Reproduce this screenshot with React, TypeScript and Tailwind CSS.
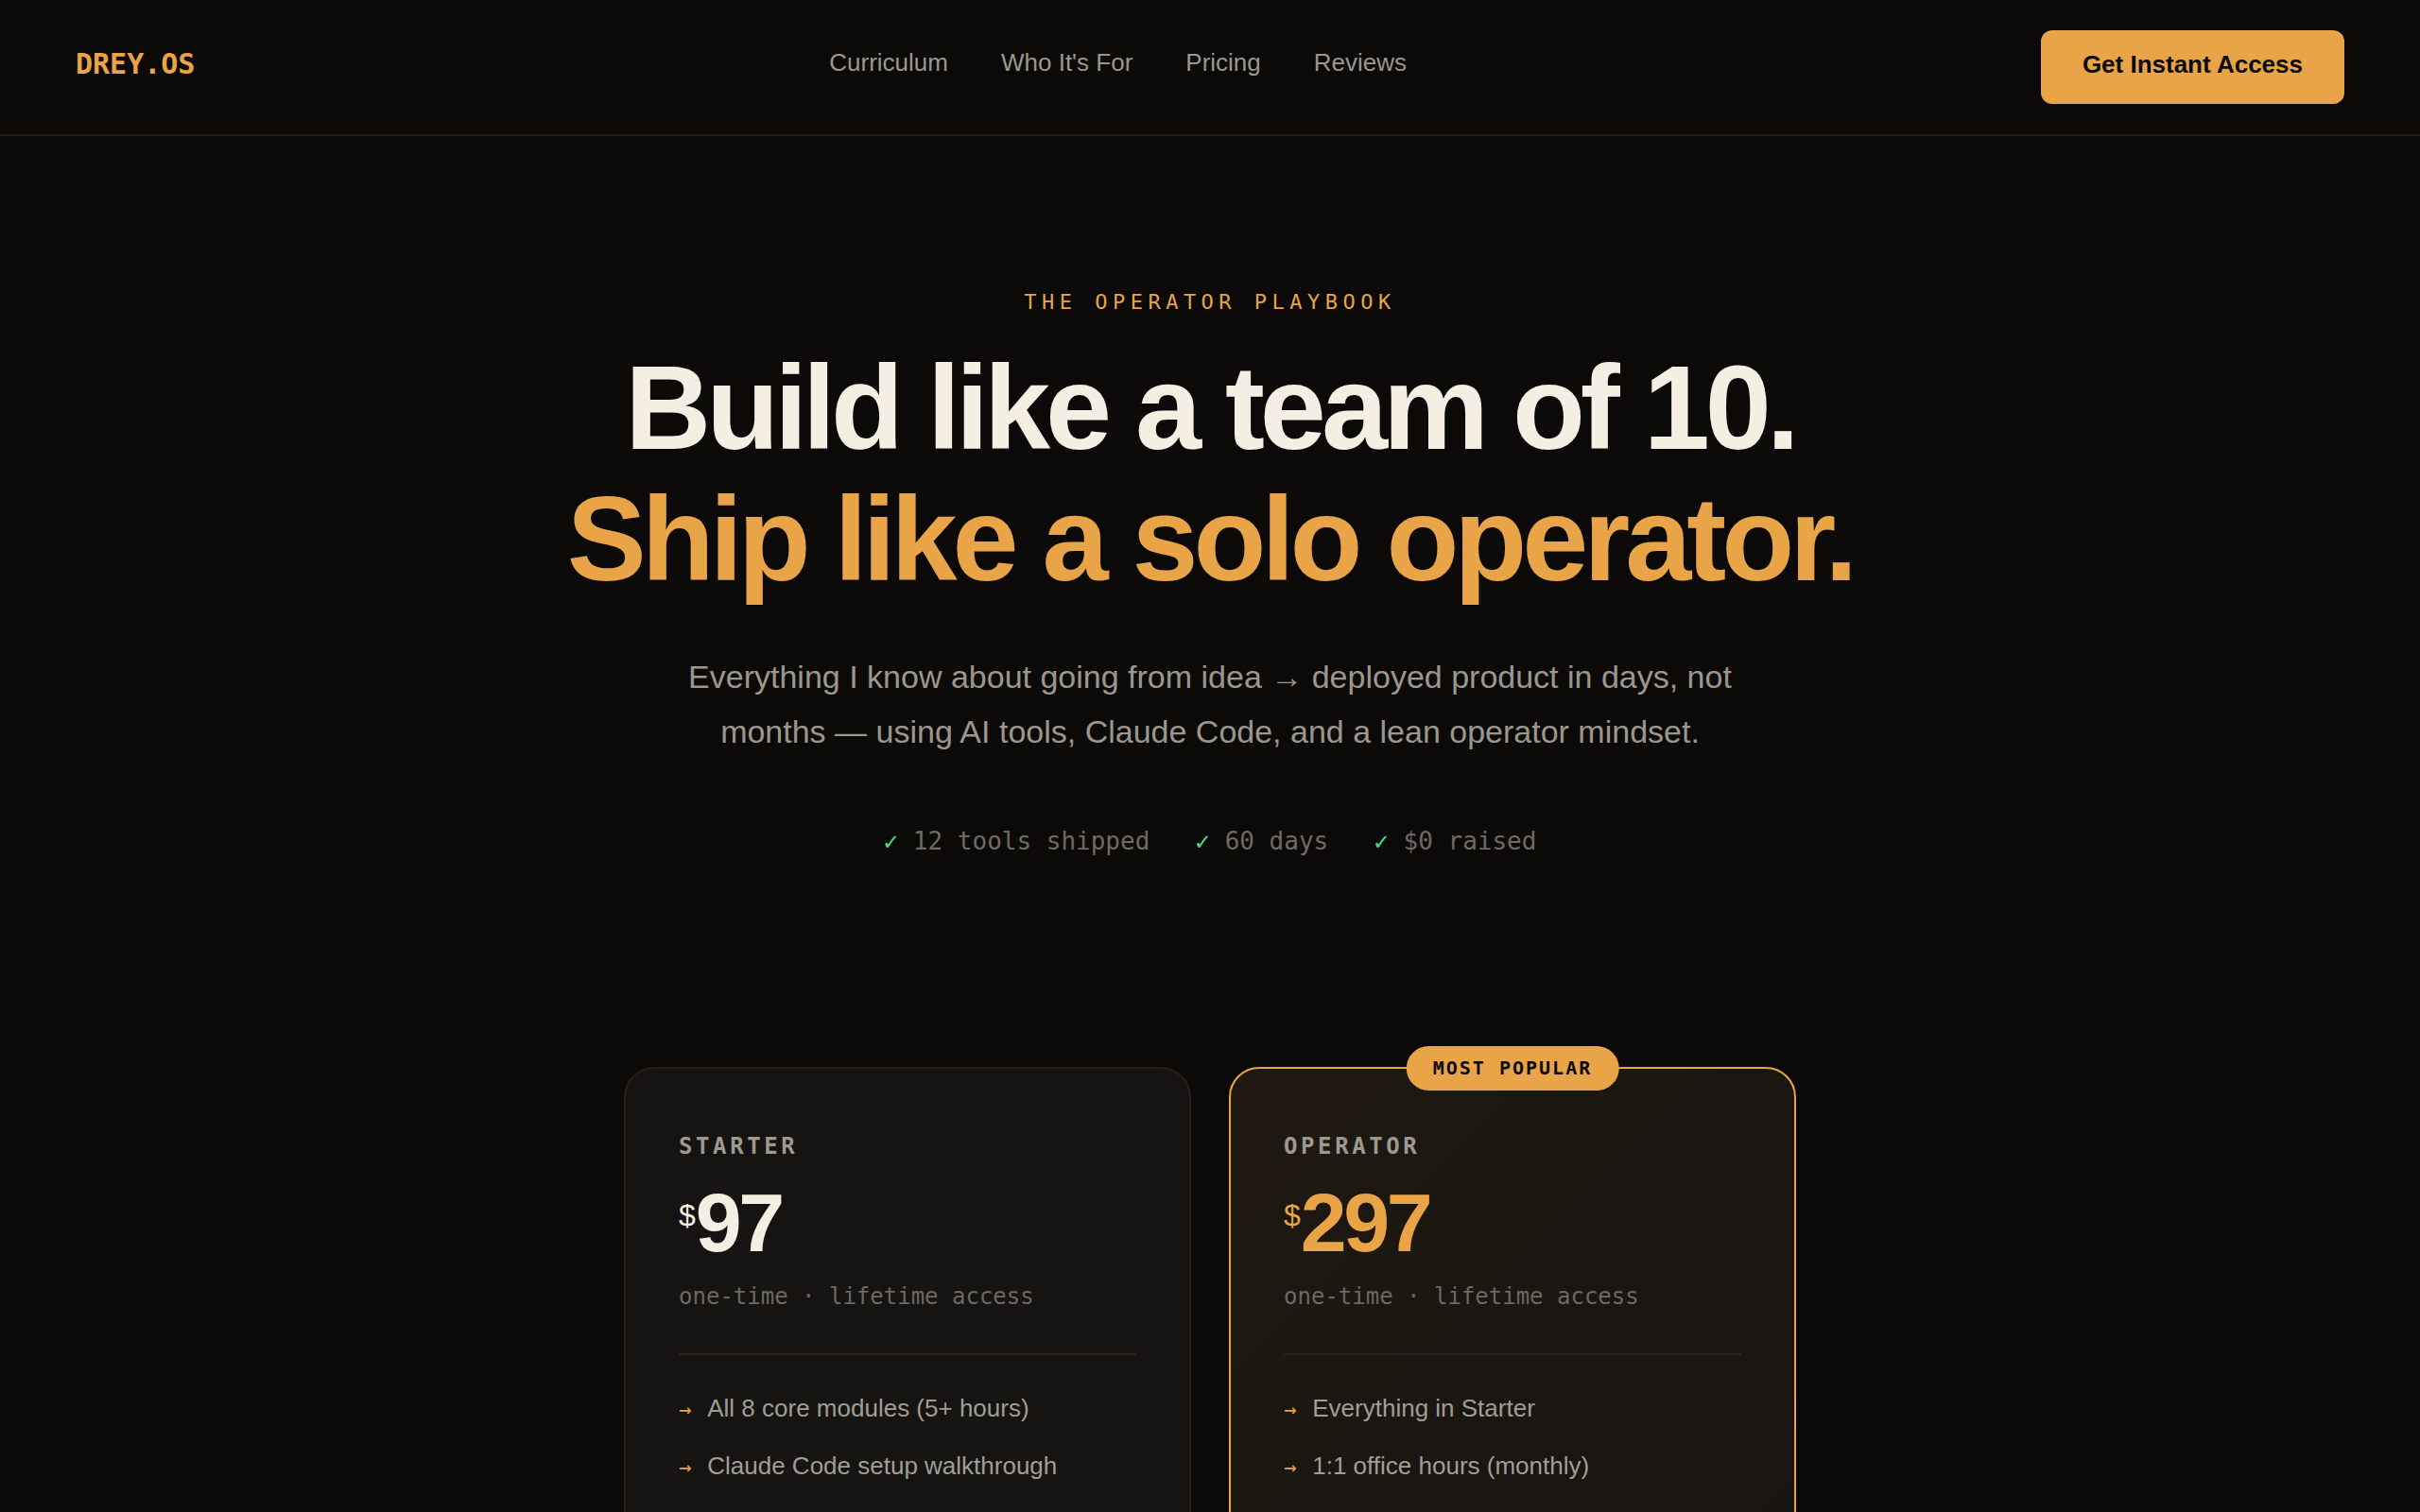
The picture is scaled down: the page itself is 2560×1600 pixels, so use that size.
import React from "react";

const mono = "font-['DejaVu_Sans_Mono','Liberation_Mono',monospace]";

type Plan = {
  name: string;
  price: string;
  features: string[];
  featured?: boolean;
};

const plans: Plan[] = [
  {
    name: "STARTER",
    price: "97",
    features: ["All 8 core modules (5+ hours)", "Claude Code setup walkthrough"],
  },
  {
    name: "OPERATOR",
    price: "297",
    featured: true,
    features: ["Everything in Starter", "1:1 office hours (monthly)"],
  },
];

function PlanCard({ plan }: { plan: Plan }) {
  const featured = !!plan.featured;
  return (
    <div
      className={
        featured
          ? "relative rounded-[32px] border-2 border-[#e8a446] bg-[linear-gradient(135deg,#1f1911_0%,#1a1611_50%,#171511_100%)] px-[56px] pt-[64px] pb-[90px]"
          : "relative rounded-[32px] border-2 border-[#261e14] bg-[#151413] px-[56px] pt-[64px] pb-[90px]"
      }
    >
      {featured && (
        <div
          className={`absolute left-1/2 top-[-24px] -translate-x-1/2 h-[47px] px-[28px] rounded-full bg-[#e8a446] flex items-center text-[20px] leading-none font-bold tracking-[0.1em] text-[#0b0a09] whitespace-nowrap ${mono}`}
        >
          MOST POPULAR
        </div>
      )}
      <div
        className={`text-[24px] leading-[36px] font-bold tracking-[0.15em] text-[#9e998f] ${mono}`}
      >
        {plan.name}
      </div>
      <div
        className={`mt-[19px] flex items-start ${
          featured ? "text-[#e8a446]" : "text-[#f4eee3]"
        }`}
      >
        <span className="text-[32px] leading-none mt-[20px]">$</span>
        <span className="text-[88px] leading-none font-bold tracking-[-0.04em]">
          {plan.price}
        </span>
      </div>
      <div className={`mt-[16px] text-[24px] leading-[36px] text-[#6d6860] ${mono}`}>
        one-time · lifetime access
      </div>
      <div className="mt-[42px] h-[2px] bg-[#2a2118]" />
      <ul className="mt-[36px] flex flex-col gap-[20px]">
        {plan.features.map((f) => (
          <li key={f} className="flex items-baseline gap-[17px]">
            <span className={`text-[22px] leading-none text-[#e8a446] ${mono}`}>→</span>
            <span className="text-[26px] leading-[1.6] text-[#a29d93]">{f}</span>
          </li>
        ))}
      </ul>
    </div>
  );
}

export default function App() {
  return (
    <div className="min-h-screen bg-[#0b0a09] font-['Liberation_Sans',Arial,sans-serif] text-[#f4eee3]">
      <header className="h-[144px] border-b-2 border-[#241b12] px-[80px] flex items-center justify-between">
        <div className={`mb-[7px] text-[30px] leading-none font-bold text-[#e8a446] ${mono}`}>
          DREY.OS
        </div>
        <nav className="mb-[10px] flex items-center gap-[56px] text-[26px] text-[#9c978d]">
          <a>Curriculum</a>
          <a>Who It's For</a>
          <a>Pricing</a>
          <a>Reviews</a>
        </nav>
        <button className="h-[78px] px-[44px] pb-[6px] rounded-[12px] bg-[#e8a446] text-[26px] font-bold text-[#0b0a09]">
          Get Instant Access
        </button>
      </header>

      <main className="pt-[160px] flex flex-col items-center text-center">
        <div className={`text-[22px] leading-[32px] tracking-[0.25em] text-[#e8a446] ${mono}`}>
          THE OPERATOR PLAYBOOK
        </div>
        <h1 className="mt-[27px] text-[126px] leading-[1.1] font-bold tracking-[-0.04em]">
          <span className="block text-[#f4eee3]">Build like a team of 10.</span>
          <span className="block text-[#e8a446]">Ship like a solo operator.</span>
        </h1>
        <p className="mt-[48px] max-w-[1170px] text-[34px] leading-[1.7] text-[#9c978d] font-['Liberation_Sans','Noto_Sans_CJK_SC',sans-serif]">
          Everything I know about going from idea → deployed product in days, not months — using
          AI tools, Claude Code, and a lean operator mindset.
        </p>
        <div className={`mt-[67px] flex justify-center gap-[48px] text-[26px] leading-[1.5] text-[#6f6a62] ${mono}`}>
          <span>
            <span className="text-[#4ade80]">✓</span> 12 tools shipped
          </span>
          <span>
            <span className="text-[#4ade80]">✓</span> 60 days
          </span>
          <span>
            <span className="text-[#4ade80]">✓</span> $0 raised
          </span>
        </div>

        <section className="mt-[219px] w-[1240px] grid grid-cols-2 gap-[40px] text-left">
          {plans.map((p) => (
            <PlanCard key={p.name} plan={p} />
          ))}
        </section>
      </main>
    </div>
  );
}
